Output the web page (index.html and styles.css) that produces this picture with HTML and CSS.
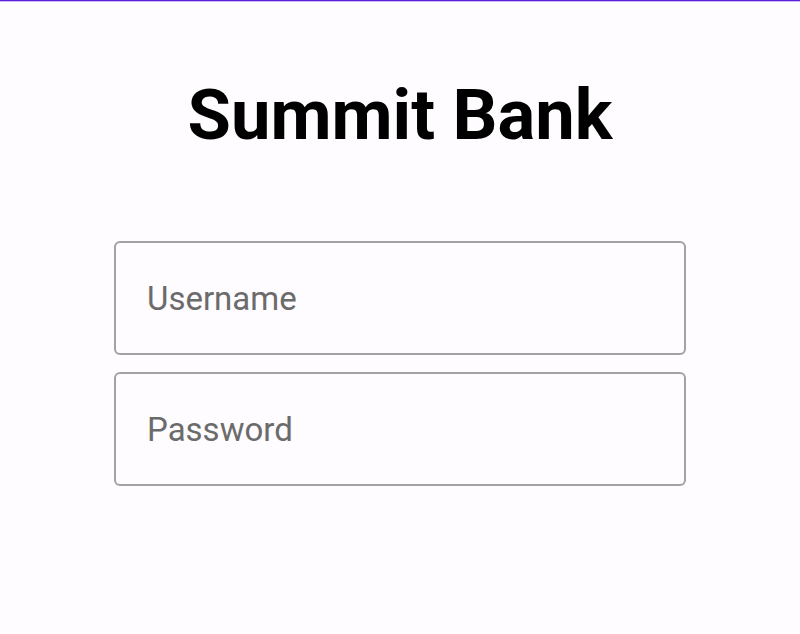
FILE: index.html
```html
<!DOCTYPE html>
<html>
<head>
<meta charset="utf-8">
<link rel="stylesheet" href="styles.css">
</head>
<body>
<div class="topbar"></div>
<main class="page">
  <h1 class="title">Summit Bank</h1>
  <form class="form">
    <input class="field" type="text" placeholder="Username">
    <input class="field" type="password" placeholder="Password">
  </form>
</main>
</body>
</html>
```
FILE: styles.css
```css
html, body {
  margin: 0;
  padding: 0;
  background: #fefcff;
  font-family: Roboto, "Noto Sans", sans-serif;
}
.topbar {
  height: 1px;
  background: #5b1fe0;
  border-bottom: 1px solid #c9b6f5;
}
.page {
  display: flex;
  flex-direction: column;
  align-items: center;
}
.title {
  margin: 70px 0 0 0;
  font-size: 70.5px;
  font-weight: 700;
  line-height: 86px;
  color: #000;
  letter-spacing: 0;
}
.form {
  margin-top: 83px;
  width: 572px;
  display: flex;
  flex-direction: column;
  gap: 17px;
}
.field {
  box-sizing: border-box;
  height: 114px;
  width: 100%;
  border: 2px solid #a2a2a2;
  border-radius: 6px;
  background: #fefcff;
  padding: 0 31px;
  font-family: Roboto, "Noto Sans", sans-serif;
  font-size: 33px;
  color: #222;
  outline: none;
}
.field::placeholder {
  color: #6b6b6b;
}
```
